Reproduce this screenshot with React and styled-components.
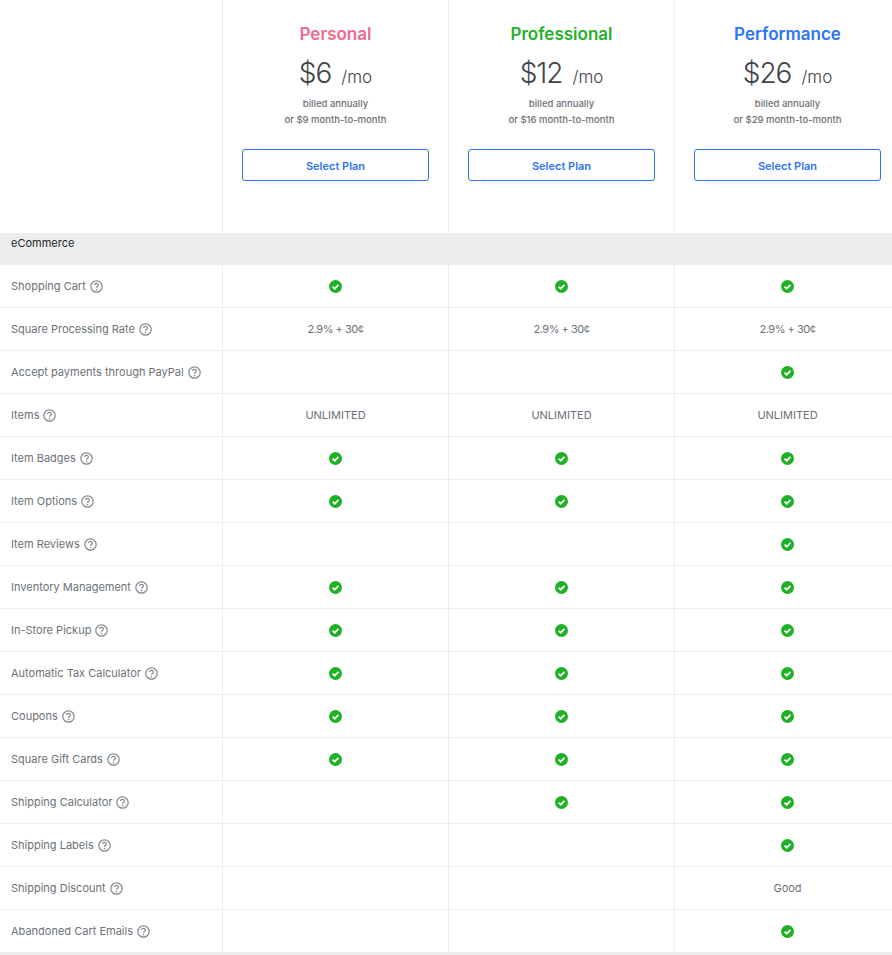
import React from "react";
import styled, { createGlobalStyle } from "styled-components";

const GlobalStyle = createGlobalStyle`
  html, body {
    margin: 0;
    padding: 0;
    background: #fff;
    overflow: hidden;
  }
  body {
    font-family: Inter, "Liberation Sans", sans-serif;
  }
`;

const Page = styled.div`
  width: 892px;
  height: 955px;
  overflow: hidden;
`;

const Table = styled.div`
  width: 900px;
  border-bottom: 3px solid #ecedee;
`;

const Row = styled.div`
  display: grid;
  grid-template-columns: 222px 226px 226px 226px;
  height: 43px;
  box-sizing: border-box;
  border-bottom: 1px solid #ecedee;

  &:last-child {
    border-bottom-color: #ecedee;
    height: 43px;
  }
`;

const HeaderRow = styled.div`
  display: grid;
  grid-template-columns: 222px 226px 226px 226px;
  height: 233px;
`;

const PlanCell = styled.div`
  border-left: 1px solid #ecedee;
  padding: 22px 19px 0;
  text-align: center;
  box-sizing: border-box;
`;

const PlanName = styled.div`
  color: ${(p) => p.$color};
  font-size: 17px;
  font-weight: 600;
  line-height: 24px;
`;

const Price = styled.div`
  color: #3e4348;
  font-size: 28px;
  line-height: 40px;
  margin-top: 7px;
  font-weight: 300;
  letter-spacing: -1px;
`;

const Per = styled.span`
  font-size: 17px;
  line-height: 1;
  margin-left: 10px;
  letter-spacing: 0;
`;

const Billed = styled.div`
  color: #6c7177;
  font-size: 9.5px;
  line-height: 16px;
  margin-top: 3px;
  font-weight: 500;
`;

const SelectButton = styled.button`
  display: block;
  width: 187px;
  height: 32px;
  margin-top: 21px;
  padding: 2px 0 0;
  background: #fff;
  border: 1px solid #2b75f4;
  border-radius: 3px;
  color: #2b75f4;
  font-family: inherit;
  font-size: 11px;
  font-weight: 600;
`;

const SectionRow = styled.div`
  height: 32px;
  background: #ecedee;
  color: #24282c;
  font-size: 11px;
  line-height: 21px;
  padding-left: 11px;
`;

const LabelCell = styled.div`
  display: flex;
  align-items: center;
  gap: 4px;
  padding-left: 11px;
  color: #6c7177;
  font-size: 11px;
`;

const ValueCell = styled.div`
  display: flex;
  align-items: center;
  justify-content: center;
  border-left: 1px solid #ecedee;
  color: #6c7177;
  font-size: 11px;
`;

const Rate = styled.span`
  letter-spacing: -0.5px;
`;

const Help = () => (
  <svg width="13" height="13" viewBox="0 0 13 13" fill="none">
    <circle cx="6.5" cy="6.5" r="5.7" stroke="#85898d" strokeWidth="1.2" />
    <path
      d="M4.6 5.1c0-1.1.8-1.7 1.9-1.7s1.9.6 1.9 1.6c0 1.4-1.9 1.4-1.9 2.7"
      stroke="#85898d"
      strokeWidth="1.2"
    />
    <circle cx="6.5" cy="9.6" r=".8" fill="#85898d" />
  </svg>
);

const Check = () => (
  <svg width="13" height="13" viewBox="0 0 14 14">
    <circle cx="7" cy="7" r="7" fill="#1fb125" />
    <path
      d="M3.9 7.2l2.2 2.2L10.2 5.2"
      fill="none"
      stroke="#fff"
      strokeWidth="1.9"
    />
  </svg>
);

const plans = [
  { name: "Personal", color: "#ee6a8c", price: "$6", monthly: "$9" },
  { name: "Professional", color: "#24b02c", price: "$12", monthly: "$16" },
  { name: "Performance", color: "#2b75f4", price: "$26", monthly: "$29" },
];

const rate = <Rate>2.9% + 30¢</Rate>;

const features = [
  ["Shopping Cart", true, true, true],
  ["Square Processing Rate", rate, rate, rate],
  ["Accept payments through PayPal", false, false, true],
  ["Items", "UNLIMITED", "UNLIMITED", "UNLIMITED"],
  ["Item Badges", true, true, true],
  ["Item Options", true, true, true],
  ["Item Reviews", false, false, true],
  ["Inventory Management", true, true, true],
  ["In-Store Pickup", true, true, true],
  ["Automatic Tax Calculator", true, true, true],
  ["Coupons", true, true, true],
  ["Square Gift Cards", true, true, true],
  ["Shipping Calculator", false, true, true],
  ["Shipping Labels", false, false, true],
  ["Shipping Discount", false, false, "Good"],
  ["Abandoned Cart Emails", false, false, true],
];

export default function App() {
  return (
    <Page>
      <GlobalStyle />
      <Table>
        <HeaderRow>
          <div />
          {plans.map((plan) => (
            <PlanCell key={plan.name}>
              <PlanName $color={plan.color}>{plan.name}</PlanName>
              <Price>
                {plan.price}
                <Per>/mo</Per>
              </Price>
              <Billed>
                billed annually
                <br />
                or {plan.monthly} month-to-month
              </Billed>
              <SelectButton>Select Plan</SelectButton>
            </PlanCell>
          ))}
        </HeaderRow>
        <SectionRow>eCommerce</SectionRow>
        {features.map(([label, ...values]) => (
          <Row key={label}>
            <LabelCell>
              {label}
              <Help />
            </LabelCell>
            {values.map((value, i) => (
              <ValueCell key={i}>
                {value === true ? <Check /> : value || null}
              </ValueCell>
            ))}
          </Row>
        ))}
      </Table>
    </Page>
  );
}
